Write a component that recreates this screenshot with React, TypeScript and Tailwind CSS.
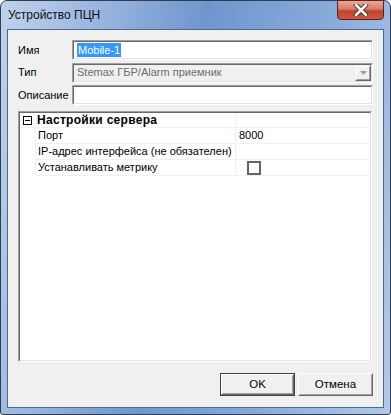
import React from 'react';

const font = { fontFamily: '"Liberation Sans", Arial, sans-serif' };

// Classic sunken 2px frame used by edit boxes and the grid
const Sunken: React.FC<{ className?: string; inner?: string; children?: React.ReactNode }> = ({ className = '', inner = 'bg-white', children }) => (
    <div className={`border border-t-[#a0a0a0] border-l-[#a0a0a0] border-b-white border-r-white ${className}`}>
        <div className={`h-full w-full border border-t-[#696969] border-l-[#696969] border-b-[#e3e3e3] border-r-[#e3e3e3] ${inner}`}>
            {children}
        </div>
    </div>
);

const Button: React.FC<{ label: string; isDefault?: boolean }> = ({ label, isDefault }) => (
    <div className={`w-[75px] h-[23px] ${isDefault ? 'border border-[#404040]' : ''}`}>
        <div className="h-full border border-t-white border-l-white border-b-[#696969] border-r-[#696969]">
            <div className="h-full flex items-center justify-center bg-[#f0f0f0] border border-t-[#f0f0f0] border-l-[#f0f0f0] border-b-[#a0a0a0] border-r-[#a0a0a0] text-[11.5px] text-black">
                {label}
            </div>
        </div>
    </div>
);

const rows = [
    { name: 'Порт', value: '8000' },
    { name: 'IP-адрес интерфейса (не обязателен)', value: '' },
    { name: 'Устанавливать метрику', value: 'check' },
];

export default function App() {
    return (
        <div style={font} className="w-[391px] h-[415px] bg-white">
            <div className="relative w-[391px] h-[415px] rounded-t-[7px] rounded-b-[3px] border border-[#2e3d52] bg-[linear-gradient(100deg,#bfd2ec_0%,#9cb8e0_20%,#6f96ce_45%,#86a9d9_70%,#b2c8e7_100%)] flex flex-col">
                {/* Title bar */}
                <div className="h-[28px] flex items-center pl-[7px] text-[12px] text-[#111]">
                    Устройство ПЦН
                </div>

                {/* Close button */}
                <div className="absolute top-[-1px] right-[6px] w-[47px] h-[20px] rounded-b-[4px] border border-[#5a2318] bg-[linear-gradient(180deg,#e8a899_0%,#d77c68_45%,#c0432b_55%,#d0563b_100%)] flex items-center justify-center">
                    <svg width="16" height="12" viewBox="0 0 16 12">
                        <path d="M3 1 L13 11 M13 1 L3 11" stroke="#3b2a2a" strokeWidth="4.5" strokeLinecap="round" />
                        <path d="M3 1 L13 11 M13 1 L3 11" stroke="#ffffff" strokeWidth="2.6" strokeLinecap="round" />
                    </svg>
                </div>

                {/* Client area */}
                <div className="mx-[6px] mb-[6px] flex-1 border border-[#52688a] bg-[#f0f0f0] px-[10px] pt-[10px] flex flex-col text-[11px] text-black">
                    <div className="flex flex-col gap-[3px]">
                        <div className="flex items-center h-[20px]">
                            <div className="w-[54px]">Имя</div>
                            <Sunken className="flex-1 h-[20px]">
                                <div className="h-full flex items-center pl-[3px]">
                                    <span className="bg-[#3399ff] text-white px-[1px] leading-[14px]">Mobile-1</span>
                                </div>
                            </Sunken>
                        </div>
                        <div className="flex items-center h-[19px]">
                            <div className="w-[54px]">Тип</div>
                            <Sunken className="flex-1 h-[20px]" inner="bg-[#f0f0f0]">
                                <div className="h-full flex items-center pl-[3px] text-[#6d6d6d]">
                                    <span className="flex-1">Stemax ГБР/Alarm приемник</span>
                                    <div className="w-[16px] h-full border border-t-[#f0f0f0] border-l-[#f0f0f0] border-b-[#696969] border-r-[#696969]">
                                        <div className="h-full border border-t-white border-l-white border-b-[#a0a0a0] border-r-[#a0a0a0] flex items-center justify-center">
                                            <svg width="7" height="4" viewBox="0 0 7 4">
                                                <path d="M0 0 H7 L3.5 4 Z" fill="#a0a0a0" />
                                            </svg>
                                        </div>
                                    </div>
                                </div>
                            </Sunken>
                        </div>
                        <div className="flex items-center h-[20px]">
                            <div className="w-[54px]">Описание</div>
                            <Sunken className="flex-1 h-[20px]" />
                        </div>
                    </div>

                    {/* Property grid */}
                    <Sunken className="mt-[6px] h-[251px] w-[354px]">
                        <div className="flex flex-col">
                            <div className="flex h-[15px] border-b border-[#f0f0f0]">
                                <div className="w-[15px] flex items-center justify-center">
                                    <div className="w-[9px] h-[9px] border border-black flex items-center justify-center">
                                        <div className="w-[5px] h-[1px] bg-black" />
                                    </div>
                                </div>
                                <div className="w-[201px] pl-[2px] font-bold leading-[15px] text-[12px] tracking-[0.3px] border-r border-[#f0f0f0] whitespace-nowrap">Настройки сервера</div>
                                <div className="flex-1" />
                            </div>
                            {rows.map(r => (
                                <div key={r.name} className="flex h-[16px]">
                                    <div className="w-[15px]" />
                                    <div className="flex flex-1 border-b border-l border-[#f0f0f0]">
                                        <div className="w-[200px] pl-[2px] leading-[15px] border-r border-[#f0f0f0] whitespace-nowrap">{r.name}</div>
                                        <div className="flex-1 pl-[3px] leading-[15px]">
                                            {r.value === 'check' ? (
                                                <div className="ml-[8px] mt-[1px] w-[14px] h-[14px] border-2 border-[#646464] bg-white" />
                                            ) : r.value}
                                        </div>
                                    </div>
                                </div>
                            ))}
                        </div>
                    </Sunken>

                    <div className="mt-[11px] flex justify-end gap-[3px]">
                        <Button label="OK" isDefault />
                        <Button label="Отмена" />
                    </div>
                </div>
            </div>
        </div>
    );
}
